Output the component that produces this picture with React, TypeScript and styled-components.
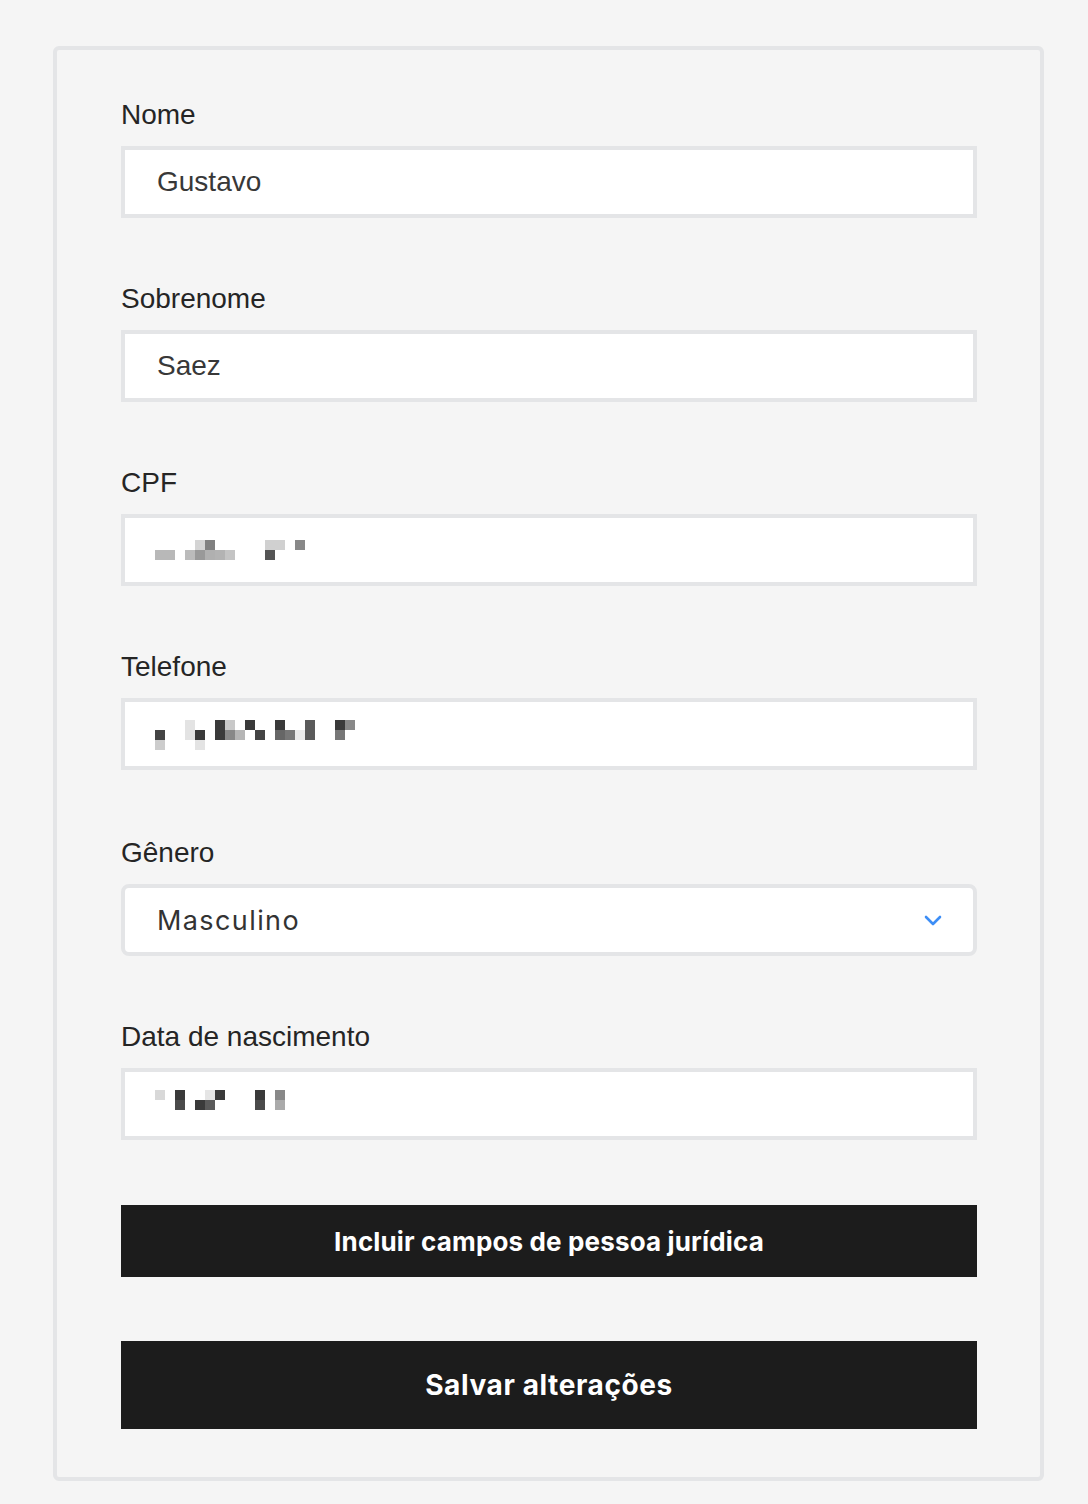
import React from "react";
import styled, { createGlobalStyle } from "styled-components";

const GlobalStyle = createGlobalStyle`
  html, body {
    margin: 0;
    padding: 0;
    background: #f5f5f5;
  }
  body {
    font-family: "Liberation Sans", Arial, sans-serif;
  }
  * { box-sizing: border-box; }
`;

const Page = styled.div`
  padding: 46px 44px 24px 53px;
`;

const Card = styled.form`
  display: flex;
  flex-direction: column;
  border: 4px solid #e4e5e7;
  border-radius: 6px;
  background: #f5f5f5;
  padding: 50px 63px 48px 64px;
`;

const FieldList = styled.div`
  display: flex;
  flex-direction: column;
  gap: 66px;
`;

const Field = styled.div<{ $shift?: number }>`
  display: flex;
  flex-direction: column;
  margin-top: ${(p) => p.$shift ?? 0}px;
`;

const Label = styled.label`
  font-size: 28px;
  line-height: 30px;
  color: #252525;
  margin-bottom: 16px;
`;

const InputBox = styled.div`
  display: flex;
  align-items: center;
  height: 72px;
  border: 4px solid #e4e5e7;
  background: #ffffff;
  padding-left: 32px;
  font-size: 28px;
  color: #383838;
`;

const MosaicSvg = styled.svg`
  align-self: stretch;
  display: block;
  margin-left: -2px;
`;

const SelectBox = styled.div`
  display: flex;
  align-items: center;
  justify-content: space-between;
  height: 72px;
  border: 4px solid #e4e5e7;
  border-radius: 8px;
  background: #ffffff;
  padding: 0 31px 0 32px;
  font-family: Inter, "Noto Sans", sans-serif;
  font-size: 27px;
  letter-spacing: 1.4px;
  color: #333333;
`;

const Actions = styled.div`
  display: flex;
  flex-direction: column;
  gap: 64px;
  margin-top: 65px;
`;

const DarkButton = styled.button<{ $height: number; $size: number; $spacing: number }>`
  display: flex;
  align-items: center;
  justify-content: center;
  height: ${(p) => p.$height}px;
  border: none;
  background: #1c1c1c;
  color: #ffffff;
  font-family: Inter, "Noto Sans", sans-serif;
  font-weight: 700;
  font-size: ${(p) => p.$size}px;
  letter-spacing: ${(p) => p.$spacing}px;
  cursor: pointer;
  padding: 0;
`;

type Block = [number, number, string];

const cpf: Block[] = [
  [40, 22, "#d4d4d4"], [50, 22, "#808080"], [110, 22, "#d0d0d0"], [120, 22, "#d0d0d0"], [140, 22, "#888888"],
  [0, 32, "#b8b8b8"], [10, 32, "#b8b8b8"], [30, 32, "#bbbbbb"], [40, 32, "#999999"], [50, 32, "#b0b0b0"],
  [60, 32, "#b3b3b3"], [70, 32, "#c4c4c4"], [110, 32, "#555555"],
];

const phone: Block[] = [
  [30, 18, "#e3e3e3"], [60, 18, "#3a3a3a"], [70, 18, "#c8c8c8"], [90, 18, "#3a3a3a"], [120, 18, "#3a3a3a"],
  [150, 18, "#5a5a5a"], [180, 18, "#3a3a3a"], [190, 18, "#888888"],
  [0, 28, "#444444"], [30, 28, "#e3e3e3"], [40, 28, "#3a3a3a"], [60, 28, "#3a3a3a"], [70, 28, "#888888"],
  [80, 28, "#b5b5b5"], [100, 28, "#444444"], [120, 28, "#666666"], [130, 28, "#777777"], [140, 28, "#eaeaea"],
  [150, 28, "#5a5a5a"], [180, 28, "#777777"],
  [0, 38, "#cccccc"], [40, 38, "#e3e3e3"],
];

const birth: Block[] = [
  [0, 18, "#d8d8d8"], [20, 18, "#3a3a3a"], [50, 18, "#e5e5e5"], [60, 18, "#3a3a3a"], [100, 18, "#3a3a3a"],
  [120, 18, "#888888"],
  [20, 28, "#4a4a4a"], [40, 28, "#3a3a3a"], [50, 28, "#5a5a5a"], [100, 28, "#4a4a4a"], [120, 28, "#aaaaaa"],
];

const Mosaic = ({ blocks }: { blocks: Block[] }) => (
  <MosaicSvg width="220" height="64" viewBox="0 0 220 64" aria-label="conteúdo oculto">
    {blocks.map(([x, y, c], i) => (
      <rect key={i} x={x} y={y} width="10" height="10" fill={c} />
    ))}
  </MosaicSvg>
);

const Chevron = () => (
  <svg width="18" height="12" viewBox="0 0 18 12">
    <polyline points="2,3 9,10 16,3" fill="none" stroke="#3d8ef6" strokeWidth="2.6" strokeLinecap="round" strokeLinejoin="round" />
  </svg>
);

export default function App() {
  return (
    <>
      <GlobalStyle />
      <Page>
        <Card onSubmit={(e) => e.preventDefault()}>
          <FieldList>
            <Field>
              <Label>Nome</Label>
              <InputBox>Gustavo</InputBox>
            </Field>
            <Field>
              <Label>Sobrenome</Label>
              <InputBox>Saez</InputBox>
            </Field>
            <Field>
              <Label>CPF</Label>
              <InputBox>
                <Mosaic blocks={cpf} />
              </InputBox>
            </Field>
            <Field>
              <Label>Telefone</Label>
              <InputBox>
                <Mosaic blocks={phone} />
              </InputBox>
            </Field>
            <Field $shift={2}>
              <Label>Gênero</Label>
              <SelectBox>
                <span>Masculino</span>
                <Chevron />
              </SelectBox>
            </Field>
            <Field>
              <Label>Data de nascimento</Label>
              <InputBox>
                <Mosaic blocks={birth} />
              </InputBox>
            </Field>
          </FieldList>
          <Actions>
            <DarkButton type="button" $height={72} $size={26} $spacing={0.15}>
              Incluir campos de pessoa jurídica
            </DarkButton>
            <DarkButton type="submit" $height={88} $size={28} $spacing={0.6}>
              Salvar alterações
            </DarkButton>
          </Actions>
        </Card>
      </Page>
    </>
  );
}
